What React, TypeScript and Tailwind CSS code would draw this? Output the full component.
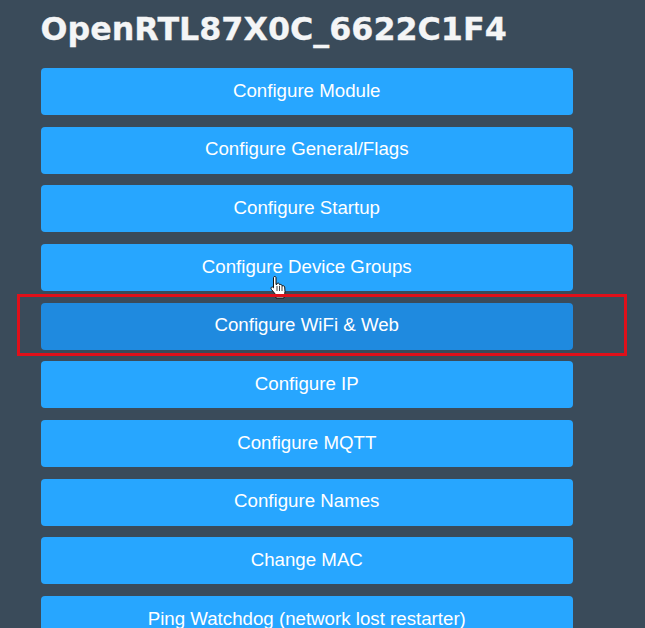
const buttons = [
  "Configure Module",
  "Configure General/Flags",
  "Configure Startup",
  "Configure Device Groups",
  "Configure WiFi & Web",
  "Configure IP",
  "Configure MQTT",
  "Configure Names",
  "Change MAC",
  "Ping Watchdog (network lost restarter)",
];

function HandCursor() {
  return (
    <svg className="absolute left-[270px] top-[276px]" width="18" height="23" viewBox="0 0 18 23">
      <path
        d="M3.5 1.5c0-1.3 2.500-1.300 2.500 0v7l1-.3V7.600c1-.8 2.200-.6 2.500.6v.6c1-.7 2.200-.4 2.500.7v.5c1.100-.6 2.500-.1 2.700 1l.3 4.500c0 1.500-.5 2.500-1 3.500v3H6v-3L1.500 13.500c-.9-1.200-.5-2.600 1-2.500l1 .8z"
        fill="#fff"
        stroke="#111"
        strokeWidth="1"
        strokeLinejoin="round"
      />
      <path d="M7 10v5M9.500 10v5M12 10v5" stroke="#111" strokeWidth="0.8" />
    </svg>
  );
}

export default function App() {
  return (
    <div className="relative h-[628px] w-[645px] overflow-hidden bg-[#3a4b5a]">
      <div className="pl-[40.5px] pt-[9px]">
        <h1 className="h-[59.1px] font-['DejaVu_Sans',sans-serif] text-[31.75px] font-bold leading-[40px] text-[#f4f5f6] [-webkit-text-stroke:0.3px_#f4f5f6]">
          OpenRTL87X0C_6622C1F4
        </h1>
        <div className="flex w-[532.5px] flex-col gap-[11.65px]">
          {buttons.map((label) => (
            <button
              className={`h-[47px] shrink-0 rounded-[4px] pb-[1.5px] font-['Liberation_Sans',sans-serif] text-[18.7px] text-white ${
                label === "Configure WiFi & Web" ? "bg-[#1f8adf]" : "bg-[#27a6ff]"
              }`}
              key={label}
              type="button"
            >
              {label}
            </button>
          ))}
        </div>
      </div>
      <HandCursor />
      <div className="absolute left-[17px] top-[294px] h-[62px] w-[610px] border-[3px] border-[#e0101a]" />
    </div>
  );
}
